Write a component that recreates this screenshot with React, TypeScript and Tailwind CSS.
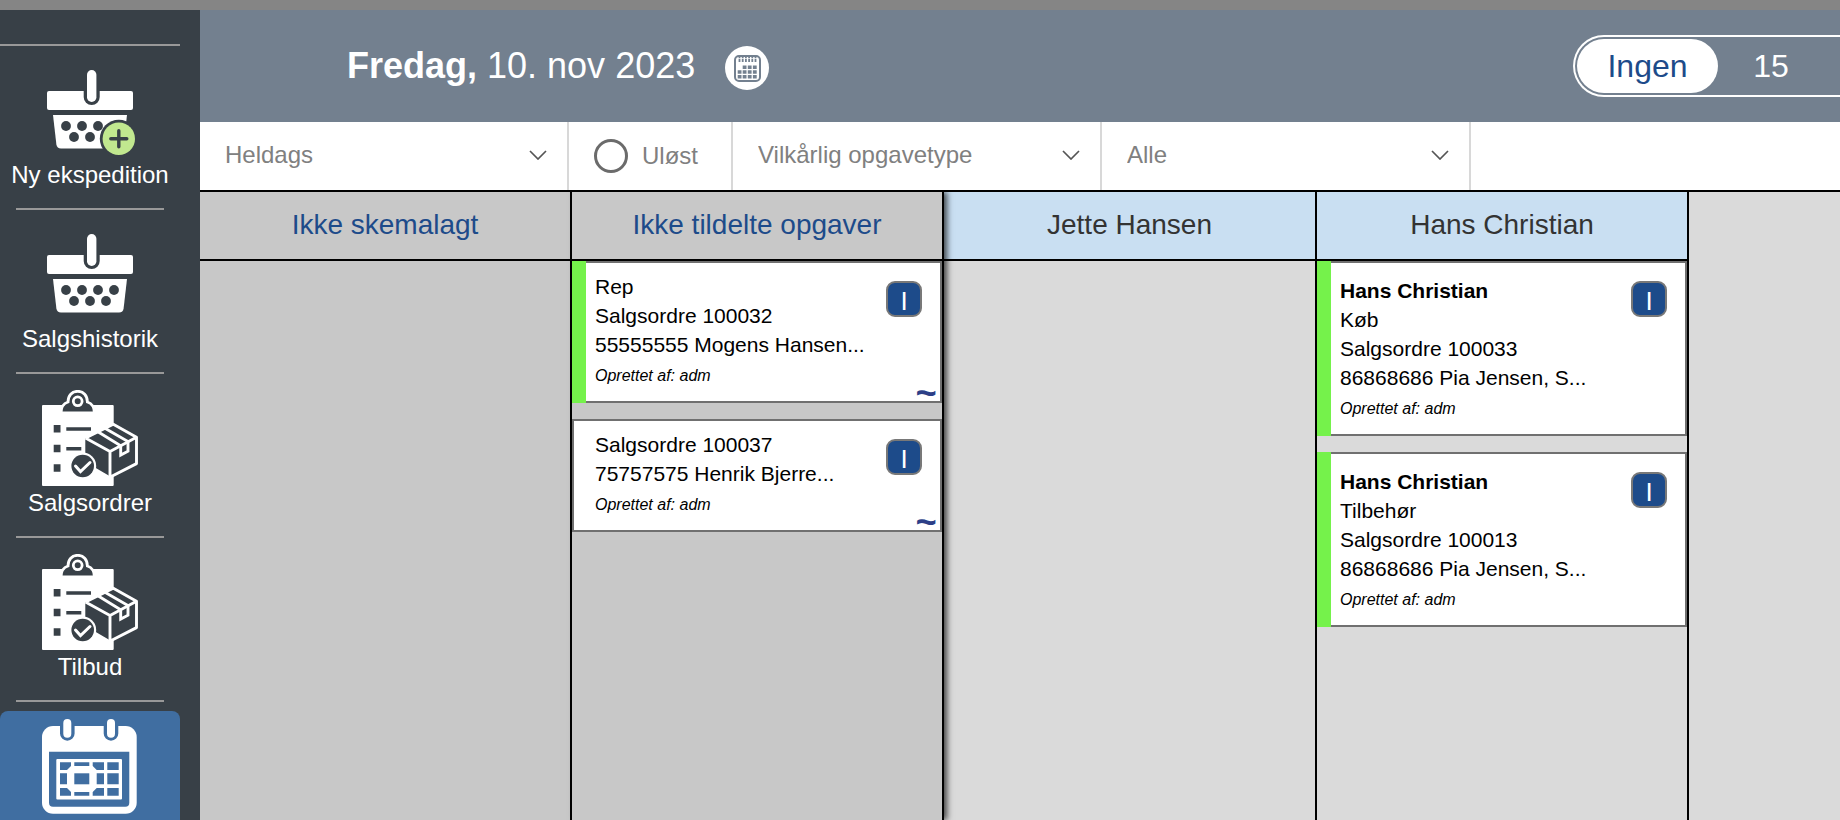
import type { ReactNode } from "react";

type Task = {
	name?: string;
	lines: string[];
	striped?: boolean;
	tilde?: boolean;
};

const unassigned: Task[] = [
	{ lines: ["Rep", "Salgsordre 100032", "55555555 Mogens Hansen..."], striped: true, tilde: true },
	{ lines: ["Salgsordre 100037", "75757575 Henrik Bjerre..."], tilde: true },
];

const hansTasks: Task[] = [
	{
		name: "Hans Christian",
		lines: ["Køb", "Salgsordre 100033", "86868686 Pia Jensen, S..."],
		striped: true,
	},
	{
		name: "Hans Christian",
		lines: ["Tilbehør", "Salgsordre 100013", "86868686 Pia Jensen, S..."],
		striped: true,
	},
];

function BasketIcon({ plus = false }: { plus?: boolean }) {
	return (
		<svg viewBox="0 0 96 96" className="size-24" aria-hidden="true">
			<rect x="5" y="29" width="86" height="19" rx="2" fill="#fff" />
			<path d="M41.7 28h16v7a8 8 0 0 1-16 0z" fill="#384047" />
			<rect x="45" y="8" width="9.4" height="32" rx="4.7" fill="#fff" />
			<path d="M11 53h74l-3.4 29.5q-.5 4-4.6 4H19q-4 0-4.6-4z" fill="#fff" />
			<g fill="#384047">
				<circle cx="24" cy="64" r="4.9" />
				<circle cx="40" cy="64" r="4.9" />
				<circle cx="56" cy="64" r="4.9" />
				<circle cx="72" cy="64" r="4.9" />
				<circle cx="32" cy="75" r="4.9" />
				<circle cx="48" cy="75" r="4.9" />
				<circle cx="64" cy="75" r="4.9" />
			</g>
			{plus && (
				<>
					<circle cx="76.8" cy="76.7" r="19" fill="#384047" />
					<circle cx="76.8" cy="76.7" r="16.2" fill="#c1e88f" />
					<path
						d="M68.8 76.7h16M76.8 68.7v16"
						stroke="#384047"
						strokeWidth="3.4"
						strokeLinecap="round"
					/>
				</>
			)}
		</svg>
	);
}

function OrderIcon() {
	return (
		<svg viewBox="0 0 96 96" className="size-24" fill="none" aria-hidden="true">
			<rect x="0" y="15" width="71.7" height="81" rx="1" fill="#fff" />
			{/* klemme */}
			<path
				d="M19 23c0-6 2.5-9.5 7-11 0-6.5 4-10.7 9.7-10.7s9.7 4.2 9.7 10.7c4.5 1.5 7 5 7 11z"
				fill="#384047"
				stroke="#fff"
				strokeWidth="2.8"
			/>
			<circle cx="35.7" cy="11.3" r="4.4" stroke="#fff" strokeWidth="2.8" />
			<path
				d="M11.7 35h6.8v7.5h-6.8zM11.7 54.8h6.8v7.5h-6.8zM11.7 74.2h6.8v7.5h-6.8zM24.3 37.3H49v3.4H24.3zM24.3 57h15v3.4h-15z"
				fill="#384047"
			/>
			{/* kasse */}
			<path d="M43.3 48.5 71.3 34 95 47.3v26.5L68 87 43.3 73z" fill="#384047" />
			<path
				d="M43.5 48 71.3 34.2 94.5 47.3v26.3L68.3 87M43.5 48 68 61.5l26.5-14.2M68 61.5V88"
				stroke="#fff"
				strokeWidth="2.9"
				strokeLinejoin="round"
			/>
			<path
				d="M55.5 41.5 78.7 55.8V65l7.3-3.8V51.5L62.5 38"
				stroke="#fff"
				strokeWidth="2.9"
			/>
			<path d="m43.5 72 24 14v10h-24z" fill="#fff" />
			<circle cx="40.7" cy="76" r="13.5" fill="#fff" />
			<circle cx="40.7" cy="76" r="11.3" fill="#384047" />
			<path d="m33.5 76 5 5.5 9.5-9" stroke="#fff" strokeWidth="3" strokeLinecap="round" />
		</svg>
	);
}

function PlannerIcon() {
	return (
		<svg viewBox="0 0 96 98" className="h-[98px] w-24" aria-hidden="true">
			<rect x="0" y="9" width="94.7" height="87.7" rx="11" fill="#fff" />
			<path
				d="M18 8h14.6v8.4a7.3 7.3 0 0 1-14.6 0zM61.7 8h14.6v8.4a7.3 7.3 0 0 1-14.6 0z"
				fill="#406ea1"
			/>
			<rect x="21.3" y="2" width="8" height="18.7" rx="4" fill="#fff" />
			<rect x="65" y="2" width="8" height="18.7" rx="4" fill="#fff" />
			<path d="M7 34.7h80.3v51a4 4 0 0 1-4 4H11a4 4 0 0 1-4-4z" fill="#406ea1" />
			<rect x="14.3" y="42" width="65.7" height="40.5" rx="1" fill="#fff" />
			<g fill="#406ea1">
				<path d="M18 45.3h11V53H18zM32.3 45.3h15V53h-15zM50.7 45.3H62V53H50.7zM65.3 45.3h11.4V53H65.3z" />
				<path d="M18 56.3h11v11H18zM50.7 56.3H62v11H50.7zM65.3 56.3h11.4v11H65.3z" />
				<path d="M18 71h11v7.7H18zM32.3 71h15v7.7h-15zM50.7 71H62v7.7H50.7zM65.3 71h11.4v7.7H65.3z" />
			</g>
			<path d="M29 49h21.7l4 4v18l-4 4H29l-4-4V53z" fill="#fff" />
			<path d="M32.3 56.3h15v11h-15z" fill="#406ea1" />
		</svg>
	);
}

function DateIcon() {
	return (
		<svg viewBox="0 0 27 28" className="h-7 w-[27px]" fill="none" aria-hidden="true">
			<rect x="1" y="2" width="25" height="25" rx="4" stroke="#73808f" strokeWidth="2" />
			<path
				d="M5.5 1v7M8.7 1v7M11.9 1v7M15.1 1v7M18.3 1v7M21.5 1v7"
				stroke="#73808f"
				strokeWidth="1.8"
			/>
			<path d="M4 4.5h19" stroke="#fff" strokeWidth="0.7" />
			<path
				d="M8.7 11.5h3.8V15H8.7zM13.8 11.5h3.8V15h-3.8zM18.9 11.5h3.8V15h-3.8zM3.7 16.3h3.8v3.4H3.7zM8.7 16.3h3.8v3.4H8.7zM13.8 16.3h3.8v3.4h-3.8zM18.9 16.3h3.8v3.4h-3.8zM3.7 21h3.8v3.4H3.7zM8.7 21h3.8v3.4H8.7zM13.8 21h3.8v3.4h-3.8zM18.9 21h3.8v3.4h-3.8z"
				fill="#73808f"
			/>
		</svg>
	);
}

function NavItem({ label, children }: { label: string; children: ReactNode }) {
	return (
		<li>
			<a href="#" className="flex flex-col items-center pt-4 pb-[17px] text-2xl leading-[33px] text-white">
				{children}
				<span className="whitespace-nowrap">{label}</span>
			</a>
			<hr className="mx-4 border-t-2 border-[#999]" />
		</li>
	);
}

function FilterSelect({ label, value }: { label: string; value: string }) {
	return (
		<div className="relative w-[369px] shrink-0 border-r-2 border-[#d8d8d8]">
			<select
				aria-label={label}
				className="h-full w-full appearance-none bg-white pr-14 pb-0.5 pl-[25px] text-2xl text-[#808080]"
			>
				<option>{value}</option>
			</select>
			<svg
				viewBox="0 0 18 10"
				className="pointer-events-none absolute top-7 right-5 h-2.5 w-[18px]"
				fill="none"
				aria-hidden="true"
			>
				<path d="m1 1 8 8 8-8" stroke="#555" strokeWidth="1.7" />
			</svg>
		</div>
	);
}

function TaskCard({ task }: { task: Task }) {
	return (
		<article className="relative flex bg-white text-black">
			{task.striped && <div className="w-3.5 shrink-0 bg-[#75f24b]" />}
			<div
				className={`flex-1 border-[#707070] pb-2 text-[21px] leading-[29px] whitespace-nowrap ${
					task.striped ? "border-y-2 border-r-2 pl-[9px]" : "border-2 pl-[21px]"
				} ${task.name ? "pt-[13px]" : "pt-[9px]"}`}
			>
				{task.name && <h3 className="font-bold">{task.name}</h3>}
				{task.lines.map((line) => (
					<p key={line}>{line}</p>
				))}
				<p className="text-base leading-[34px] italic">Oprettet af: adm</p>
			</div>
			<button
				aria-label="Information"
				className="absolute top-5 right-5 flex size-9 items-center justify-center rounded-[9px] border-2 border-[#787878] bg-[#1d4b8a] pt-1 text-[26px] text-white"
			>
				I
			</button>
			{task.tilde && (
				<span className="absolute right-1.5 bottom-0 text-4xl leading-5 font-bold text-[#2c3f87] italic">
					~
				</span>
			)}
		</article>
	);
}

function Column({
	title,
	pool = false,
	edge = false,
	tasks = [],
}: {
	title: string;
	pool?: boolean;
	edge?: boolean;
	tasks?: Task[];
}) {
	return (
		<section
			className={`flex flex-col border-r-2 border-black ${pool ? "bg-[#c8c8c8]" : "bg-[#dadada]"} ${
				edge ? "relative z-10 shadow-[3px_0_6px_rgba(0,0,0,0.7)]" : ""
			}`}
		>
			<h2
				className={`flex h-[69px] items-center justify-center border-b-2 border-black pb-0.5 text-[28px] ${
					pool ? "text-[#1d4b8a]" : "bg-[#c9dff2] text-[#333]"
				}`}
			>
				{title}
			</h2>
			<div className="flex flex-col gap-4">
				{tasks.map((task) => (
					<TaskCard key={task.lines.join()} task={task} />
				))}
			</div>
		</section>
	);
}

export default function App() {
	return (
		<div className="flex h-screen flex-col overflow-hidden border-t-10 border-[#858585] font-['Liberation_Sans',Arial,sans-serif]">
			<div className="flex min-h-0 flex-1">
				<nav aria-label="Hovedmenu" className="w-[200px] shrink-0 overflow-hidden bg-[#384047] pt-[34px] pr-5">
					<hr className="border-t-2 border-[#999]" />
					<ul>
						<NavItem label="Ny ekspedition">
							<BasketIcon plus />
						</NavItem>
						<NavItem label="Salgshistorik">
							<BasketIcon />
						</NavItem>
						<NavItem label="Salgsordrer">
							<OrderIcon />
						</NavItem>
						<NavItem label="Tilbud">
							<OrderIcon />
						</NavItem>
						<li className="mt-[9px]">
							<a
								href="#"
								aria-label="Kalender"
								aria-current="page"
								className="flex h-40 justify-center rounded-lg bg-[#406ea1] pt-1.5"
							>
								<PlannerIcon />
							</a>
						</li>
					</ul>
				</nav>

				<main className="flex min-w-0 flex-1 flex-col">
					<header className="flex h-28 shrink-0 items-center bg-[#73808f] pl-[147px] text-white">
						<h1 className="text-4xl whitespace-nowrap">
							<strong>Fredag,</strong> 10. nov 2023
						</h1>
						<button
							aria-label="Vælg dato"
							className="mt-1 ml-[30px] flex size-11 items-center justify-center rounded-full bg-white"
						>
							<DateIcon />
						</button>
						<div className="ml-auto flex h-[62px] w-[267px] rounded-l-full border-2 border-r-0 border-white p-0.5 text-[32px]">
							<button className="w-[141px] rounded-full bg-white text-[#1d4b8a]">Ingen</button>
							<button className="w-[106px]">15</button>
						</div>
					</header>

					<form className="flex h-[68px] shrink-0 bg-white">
						<FilterSelect label="Tidsrum" value="Heldags" />
						<label className="flex w-[164px] shrink-0 items-center gap-3.5 border-r-2 border-[#d8d8d8] pl-[25px] text-2xl text-[#808080]">
							<input
								type="radio"
								name="status"
								className="size-[34px] appearance-none rounded-full border-3 border-[#6b6b6b] checked:bg-[#6b6b6b]"
							/>
							Uløst
						</label>
						<FilterSelect label="Opgavetype" value="Vilkårlig opgavetype" />
						<FilterSelect label="Medarbejder" value="Alle" />
					</form>

					<div className="grid min-h-0 flex-1 grid-cols-[372px_372px_373px_372px_1fr] overflow-hidden border-t-2 border-black bg-[#dadada]">
						<Column title="Ikke skemalagt" pool />
						<Column title="Ikke tildelte opgaver" pool edge tasks={unassigned} />
						<Column title="Jette Hansen" />
						<Column title="Hans Christian" tasks={hansTasks} />
					</div>
				</main>
			</div>
		</div>
	);
}
